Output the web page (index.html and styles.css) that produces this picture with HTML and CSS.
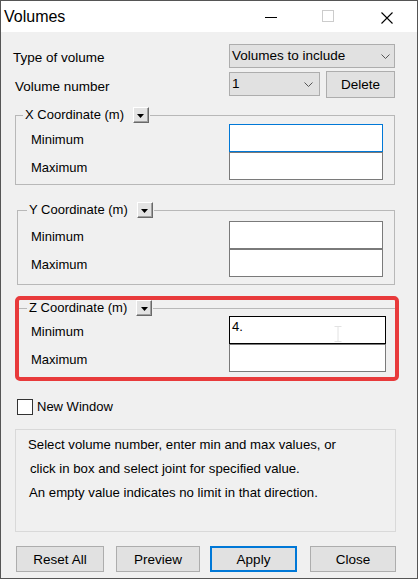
FILE: index.html
```html
<!DOCTYPE html>
<html>
<head>
<meta charset="utf-8">
<link rel="stylesheet" href="styles.css">
</head>
<body>
<div class="window">
  <div class="titlebar">
    <span class="title">Volumes</span>
    <svg class="tb-min" width="12" height="31" viewBox="0 0 12 31"><line x1="0" y1="16.5" x2="12" y2="16.5" stroke="#000" stroke-width="1"/></svg>
    <svg class="tb-max" width="12" height="31" viewBox="0 0 12 31"><rect x="0.5" y="9.5" width="11" height="11" fill="none" stroke="#cccccc" stroke-width="1"/></svg>
    <svg class="tb-close" width="12" height="31" viewBox="0 0 12 31"><path d="M0.5 11.5 L11.5 22.5 M11.5 11.5 L0.5 22.5" stroke="#000" stroke-width="1.1" fill="none"/></svg>
  </div>
  <div class="content">
    <div class="row row-type">
      <span class="lbl lbl-type">Type of volume</span>
      <div class="combo combo-wide">
        <span class="combo-text">Volumes to include</span>
        <svg class="chev" width="9" height="5" viewBox="0 0 9 5"><path d="M0.5 0.5 L4.5 4.5 L8.5 0.5" stroke="#555" stroke-width="1" fill="none"/></svg>
      </div>
    </div>
    <div class="row row-num">
      <span class="lbl lbl-num">Volume number</span>
      <div class="combo combo-num">
        <span class="combo-text">1</span>
        <svg class="chev" width="9" height="5" viewBox="0 0 9 5"><path d="M0.5 0.5 L4.5 4.5 L8.5 0.5" stroke="#555" stroke-width="1" fill="none"/></svg>
      </div>
      <div class="btn btn-delete">Delete</div>
    </div>

    <fieldset class="group group-x">
      <legend class="legend"><span>X Coordinate (m)</span><span class="ddbtn"><svg width="7" height="4" viewBox="0 0 7 4"><path d="M0 0 H7 L3.5 4 Z" fill="#000"/></svg></span></legend>
      <div class="grid">
        <span class="lbl-f">Minimum</span><div class="edit edit-focus"></div>
        <span class="lbl-f">Maximum</span><div class="edit"></div>
      </div>
    </fieldset>

    <fieldset class="group group-y">
      <legend class="legend"><span>Y Coordinate (m)</span><span class="ddbtn"><svg width="7" height="4" viewBox="0 0 7 4"><path d="M0 0 H7 L3.5 4 Z" fill="#000"/></svg></span></legend>
      <div class="grid">
        <span class="lbl-f">Minimum</span><div class="edit"></div>
        <span class="lbl-f">Maximum</span><div class="edit"></div>
      </div>
    </fieldset>

    <fieldset class="group group-z">
      <legend class="legend"><span>Z Coordinate (m)</span><span class="ddbtn"><svg width="7" height="4" viewBox="0 0 7 4"><path d="M0 0 H7 L3.5 4 Z" fill="#000"/></svg></span></legend>
      <div class="grid">
        <span class="lbl-f">Minimum</span><div class="edit edit-dark"><span class="edit-text">4.</span><svg class="ibeam" width="8" height="16" viewBox="0 0 8 16"><path d="M0.5 0.5 H7.5 M4 0.5 V15.5 M0.5 15.5 H7.5" stroke="#e2e2e2" stroke-width="1" fill="none"/></svg></div>
        <span class="lbl-f">Maximum</span><div class="edit"></div>
      </div>
    </fieldset>

    <div class="row row-check">
      <span class="checkbox"></span>
      <span class="check-lbl">New Window</span>
    </div>

    <div class="info">
      <div class="info-line">Select volume number, enter min and max values, or</div>
      <div class="info-line l2">click in box and select joint for specified value.</div>
      <div class="info-line l3">An empty value indicates no limit in that direction.</div>
    </div>

    <div class="row row-buttons">
      <div class="btn b-reset">Reset All</div>
      <div class="btn b-preview">Preview</div>
      <div class="btn b-apply">Apply</div>
      <div class="btn b-close">Close</div>
    </div>
  </div>
  <div class="highlight"></div>
</div>
</body>
</html>
```

FILE: styles.css
```css
html, body {
  margin: 0;
  padding: 0;
  background: #f0f0f0;
}
body {
  font-family: "Liberation Sans", Arial, sans-serif;
  font-size: 13px;
  color: #000;
}
.window {
  position: relative;
  width: 418px;
  height: 579px;
  box-sizing: border-box;
  border: 1px solid #555555;
  display: flex;
  flex-direction: column;
  background: #f0f0f0;
}
.titlebar {
  height: 31px;
  flex: none;
  background: #ffffff;
  display: flex;
  align-items: center;
}
.title {
  font-size: 16px;
  padding-left: 3px;
  flex: 1;
  line-height: 31px;
  color: #000;
}
.tb-min { margin-right: 45px; flex: none; }
.tb-max { margin-right: 47px; flex: none; }
.tb-close { margin-right: 24px; flex: none; }

.content {
  flex: 1;
  display: flex;
  flex-direction: column;
}
.row {
  display: flex;
  align-items: flex-start;
}
.row-type {
  margin-top: 12px;
  height: 24px;
}
.lbl {
  line-height: 16px;
  font-size: 13.5px;
}
.lbl-type {
  margin-left: 12px;
  margin-top: 6px;
  width: 216px;
}
.combo {
  box-sizing: border-box;
  height: 24px;
  background: #e1e1e1;
  border: 1px solid #adadad;
  display: flex;
  align-items: center;
  padding-left: 2px;
}
.combo-text {
  flex: 1;
  line-height: 16px;
  font-size: 13.5px;
}
.combo-wide {
  width: 166px;
  padding-right: 4px;
}
.chev { flex: none; }
.row-num {
  margin-top: 3px;
  height: 27px;
}
.lbl-num {
  margin-left: 14px;
  margin-top: 8px;
  width: 214px;
}
.combo-num {
  width: 91px;
  margin-top: 1px;
  padding-right: 6px;
}
.btn {
  box-sizing: border-box;
  background: #e1e1e1;
  border: 1px solid #adadad;
  display: flex;
  align-items: center;
  justify-content: center;
  font-size: 13.5px;
}
.btn-delete {
  width: 69px;
  height: 27px;
  margin-left: 6px;
}

.group {
  box-sizing: border-box;
  margin: 0;
  padding: 0;
  border: 1px solid #b8b8b8;
  min-inline-size: 0;
}
.legend {
  display: flex;
  align-items: center;
  height: 16px;
  padding: 0 1px 0 2px;
  font-size: 13px;
  line-height: 16px;
}
.ddbtn {
  box-sizing: border-box;
  width: 16px;
  height: 16px;
  margin-left: 9px;
  background: #e3e3e3;
  border-top: 1px solid #ffffff;
  border-left: 1px solid #ffffff;
  border-right: 1px solid #696969;
  border-bottom: 1px solid #696969;
  box-shadow: inset -1px -1px 0 #a0a0a0;
  display: flex;
  align-items: center;
  justify-content: center;
  padding-top: 1px;
}
.ddbtn svg { display: block; }
.grid {
  display: grid;
  grid-template-rows: 28px 28px;
}
.lbl-f {
  padding-top: 8px;
  line-height: 16px;
  font-size: 13px;
}
.edit {
  box-sizing: border-box;
  height: 28px;
  background: #ffffff;
  border: 1px solid #7a7a7a;
  position: relative;
}
.edit-focus { border-color: #0078d7; }
.edit-dark { border-color: #000000; }
.edit-text {
  display: block;
  padding: 2px 0 0 2px;
  line-height: 16px;
  font-size: 13px;
}
.ibeam {
  position: absolute;
  left: 104px;
  top: 9px;
}

.group-x {
  margin-top: 9px;
  margin-left: 14px;
  width: 380px;
  padding-top: 1px;
  padding-bottom: 4px;
}
.group-x .legend { margin-left: 7px; }
.group-x .grid { grid-template-columns: 213px 154px; }
.group-x .lbl-f { padding-left: 15px; }

.group-y {
  margin-top: 17px;
  margin-left: 16px;
  width: 378px;
  padding-top: 3px;
  padding-bottom: 7px;
}
.group-y .legend { margin-left: 9px; }
.group-y .grid { grid-template-columns: 211px 154px; }
.group-y .lbl-f { padding-left: 13px; }

.group-z {
  margin-top: 15px;
  margin-left: 17px;
  width: 379px;
  padding-top: 0;
  padding-bottom: 5px;
}
.group-z .legend { margin-left: 8px; }
.group-z .grid { grid-template-columns: 210px 157px; }
.group-z .lbl-f { padding-left: 12px; }

.row-check {
  margin-top: 21px;
  margin-left: 16px;
  align-items: center;
  height: 16px;
}
.checkbox {
  box-sizing: border-box;
  width: 16px;
  height: 16px;
  background: #ffffff;
  border: 1px solid #333333;
}
.check-lbl {
  margin-left: 4px;
  font-size: 13px;
  line-height: 16px;
}

.info {
  box-sizing: border-box;
  margin-top: 14px;
  margin-left: 14px;
  width: 381px;
  height: 103px;
  border: 1px solid #d9d9d9;
  padding: 3px 0 0 12px;
}
.info-line {
  line-height: 24px;
  font-size: 13.2px;
}
.info-line.l2 { padding-left: 2px; }
.info-line.l3 { padding-left: 1px; }

.row-buttons {
  margin-top: 14px;
  height: 26px;
}
.row-buttons .btn { height: 26px; }
.b-reset { margin-left: 15px; width: 88px; }
.b-preview { margin-left: 12px; width: 84px; }
.b-apply {
  margin-left: 10px;
  width: 87px;
  border: 2px solid #0078d7;
}
.b-close { margin-left: 13px; width: 86px; }

.highlight {
  position: absolute;
  left: 14px;
  top: 295px;
  width: 384px;
  height: 85px;
  box-sizing: border-box;
  border: 4px solid #e83a3b;
  border-radius: 5px;
  pointer-events: none;
}
```
